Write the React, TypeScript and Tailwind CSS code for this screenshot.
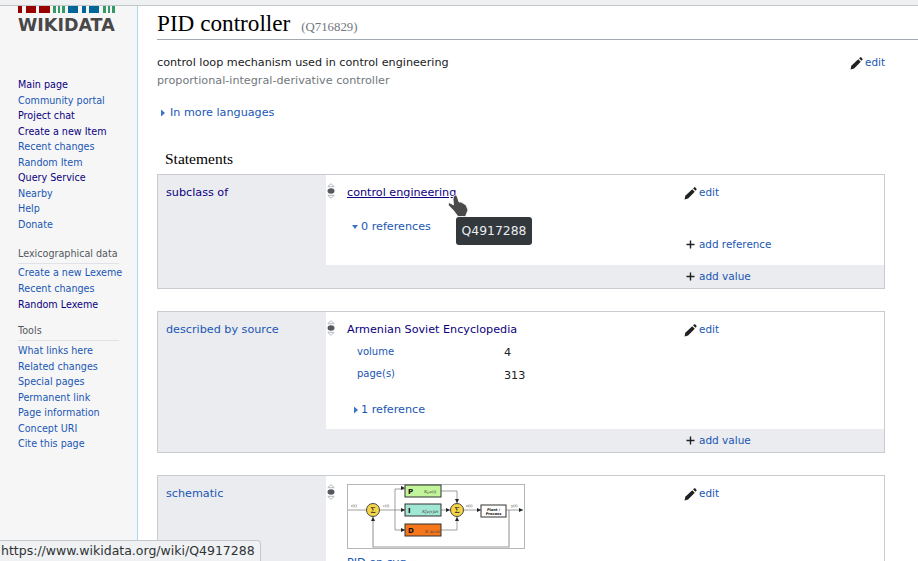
import { ReactNode } from "react";

const VISITED = "text-[#0b0080]";
const LINK = "text-[#1a56b4]";

const mainNav: [string, boolean][] = [
  ["Main page", true],
  ["Community portal", false],
  ["Project chat", true],
  ["Create a new Item", true],
  ["Recent changes", false],
  ["Random Item", false],
  ["Query Service", true],
  ["Nearby", false],
  ["Help", false],
  ["Donate", false],
];

const lexemeNav: [string, boolean][] = [
  ["Create a new Lexeme", false],
  ["Recent changes", false],
  ["Random Lexeme", true],
];

const toolsNav: [string, boolean][] = [
  ["What links here", false],
  ["Related changes", false],
  ["Special pages", false],
  ["Permanent link", false],
  ["Page information", false],
  ["Concept URI", false],
  ["Cite this page", false],
];

function NavList({ items }: { items: [string, boolean][] }) {
  return (
    <ul className="text-[9.6px] leading-[15.55px]">
      {items.map(([label, visited]) => (
        <li key={label} className={visited ? VISITED : LINK}>
          {label}
        </li>
      ))}
    </ul>
  );
}

function NavHeading({ children }: { children: ReactNode }) {
  return (
    <div className="mr-[18px] border-b border-[#dfe3e8] pb-[2px] text-[9.6px] leading-[14px] whitespace-nowrap text-[#54595d]">
      {children}
    </div>
  );
}

function Logo() {
  const bars: [number, number, string][] = [
    [0, 4, "#990000"], [8, 10, "#990000"], [21, 11, "#990000"],
    [35, 3, "#339966"], [40, 2, "#339966"], [44, 3, "#339966"],
    [50, 10, "#006699"], [64, 4, "#006699"], [71, 10, "#006699"],
    [85, 3, "#339966"], [90, 2, "#339966"], [94, 3, "#339966"],
  ];
  return (
    <div className="pl-[18px]">
      <svg width="97" height="7" className="block">
        {bars.map(([x, w, c]) => (
          <rect key={x} x={x} width={w} height="7" fill={c} />
        ))}
      </svg>
      <div className="mt-[3px] text-[17.5px] leading-[18px] font-bold whitespace-nowrap text-[#484848]">WIKIDATA</div>
    </div>
  );
}

function Sidebar() {
  return (
    <aside className="h-full w-[138px] shrink-0 border-r border-[#a7d7f9] bg-[#f6f6f6]">
      <Logo />
      <div className="pl-[18px] pt-[43px]">
        <NavList items={mainNav} />
        <div className="mt-[15px]">
          <NavHeading>Lexicographical data</NavHeading>
        </div>
        <div className="mt-[1px]">
          <NavList items={lexemeNav} />
        </div>
        <div className="mt-[12px]">
          <NavHeading>Tools</NavHeading>
        </div>
        <div className="mt-[2px]">
          <NavList items={toolsNav} />
        </div>
      </div>
    </aside>
  );
}

function PencilIcon() {
  return (
    <svg width="13" height="13" viewBox="0 0 14 14" className="shrink-0">
      <path d="M0.6 13.4 L1.4 9.4 L8.9 2.4 L11.6 5.1 L4.4 12.4 Z" fill="#202122" />
      <path d="M9.8 1.5 L11 0.4 Q11.5 0 12 0.4 L13.4 1.9 Q13.8 2.4 13.4 2.9 L12.4 4 Z" fill="#202122" />
    </svg>
  );
}

function PlusIcon() {
  return (
    <svg width="9" height="9" viewBox="0 0 9 9" className="shrink-0">
      <path d="M4.5 0.5 V8.5 M0.5 4.5 H8.5" stroke="#202122" strokeWidth="1.4" />
    </svg>
  );
}

function RankIcon() {
  return (
    <svg width="8" height="16" viewBox="0 0 8 16" className="-mt-[1px] shrink-0">
      <path d="M4 0.7 L7.2 3.7 H0.8 Z" fill="#fff" stroke="#a2a9b1" strokeWidth="0.8" />
      <ellipse cx="4" cy="8" rx="3.5" ry="2.8" fill="#54595d" />
      <path d="M4 15.3 L7.2 12.3 H0.8 Z" fill="#fff" stroke="#a2a9b1" strokeWidth="0.8" />
    </svg>
  );
}

function Toggle({ open }: { open?: boolean }) {
  return (
    <svg width="6" height="8" viewBox="0 0 6 8" className="shrink-0">
      {open ? <path d="M0 2 H6 L3 6 Z" fill="#3b73c8" /> : <path d="M1 0.5 L5 4 L1 7.5 Z" fill="#3b73c8" />}
    </svg>
  );
}

function AddValue() {
  return (
    <div className={`ml-[168px] flex h-[23px] items-center bg-[#eaecf0] pl-[360px] text-[10.5px] ${LINK}`}>
      <PlusIcon />
      <span className="ml-[4px]">add value</span>
    </div>
  );
}

function Edit() {
  return (
    <div className={`flex items-start self-start text-[10.4px] leading-[14px] ${LINK}`}>
      <PencilIcon />
      <span className="ml-[2px] -translate-y-[2px]">edit</span>
    </div>
  );
}

function Schematic() {
  return (
    <svg width="178" height="65" viewBox="0 0 178 65" className="-mt-[1px] block">
      <rect x="0.5" y="0.5" width="177" height="64" fill="#fff" stroke="#b4b8bd" />
      <g stroke="#777" fill="none" strokeWidth="0.7">
        <path d="M1 26 H19 M33 26 H58 M48 26 V5 H58 M48 26 V46 H58 M94 7 H110 V19 M94 26 H103 M94 46 H110 V33 M117 26 H134 M159 26 H176" />
        <path d="M26 33 V63 H162 V26" stroke="#999" strokeWidth="1.1" />
      </g>
      <g fill="#222">
        <path d="M58 4 L54 2 V6 Z M58 26 L54 24 V28 Z M58 46 L54 44 V48 Z M103 26 L99 24 V28 Z M134 26 L130 24 V28 Z M176 26 L172 24 V28 Z M110 19 L108 15 H112 Z M110 33 L108 37 H112 Z M26 33 L24 37 H28 Z" />
      </g>
      <circle cx="26" cy="26" r="6.5" fill="#f5d547" stroke="#444" />
      <circle cx="110" cy="26" r="6.5" fill="#f5d547" stroke="#444" />
      <rect x="58" y="1" width="36" height="12" fill="#c3f59a" stroke="#333" />
      <rect x="58" y="20" width="36" height="12" fill="#a2e6d4" stroke="#333" />
      <rect x="58" y="40" width="36" height="12" fill="#f5761b" stroke="#333" />
      <rect x="134" y="21" width="25" height="12" fill="#fff" stroke="#333" />
      <g fontFamily="Liberation Serif, serif" fill="#222">
        <text x="26" y="29" fontSize="9" textAnchor="middle">Σ</text>
        <text x="110" y="29" fontSize="9" textAnchor="middle">Σ</text>
        <g fontSize="4.5" fill="#555">
          <text x="4" y="23">r(t)</text>
          <text x="36" y="23">e(t)</text>
          <text x="119" y="23">u(t)</text>
          <text x="164" y="23">y(t)</text>
        </g>
        <g fontSize="5" fontStyle="italic" fill="#444">
          <text x="77" y="9">Kₚe(t)</text>
          <text x="75" y="28.5">K∫e(τ)dτ</text>
          <text x="78" y="48.5">K de/dt</text>
        </g>
      </g>
      <g fontFamily="DejaVu Sans, sans-serif" fill="#111" fontWeight="bold">
        <text x="61" y="10" fontSize="7">P</text>
        <text x="61" y="29" fontSize="7">I</text>
        <text x="61" y="49" fontSize="7">D</text>
        <text x="146.5" y="26.5" fontSize="3.6" textAnchor="middle">Plant /</text>
        <text x="146.5" y="31" fontSize="3.6" textAnchor="middle">Process</text>
      </g>
    </svg>
  );
}

function Claim({ label, labelColor, children, foot, height }: { label: string; labelColor: string; children: ReactNode; foot?: ReactNode; height: string }) {
  return (
    <section className={`relative ${height} overflow-hidden border border-[#c8ccd1]`}>
      <div className="absolute inset-y-0 left-0 w-[168px] bg-[#eaecf0] px-[8px] pt-[11px] text-[11.2px] leading-[14px]">
        <span className={labelColor}>{label}</span>
      </div>
      <div className="ml-[168px] flex flex-col">{children}</div>
      {foot}
    </section>
  );
}

function Overlays() {
  return (
    <>
      <svg width="23" height="24" viewBox="0 0 23 24" className="absolute left-[447px] top-[194px]">
        <path
          d="M7 1.5 Q8.5 0.5 10 2 L12 8 L14 8 L19 11 L21 16 L18.5 22.5 L11 22.5 L6.5 16.5 L1.2 11 L2.2 8.5 L6.5 11 L6 5 Z"
          fill="#4a4a4a"
          stroke="#fff"
          strokeWidth="0.8"
        />
      </svg>
      <div className="absolute left-[456px] top-[217px] flex h-[28px] w-[76px] items-center justify-center rounded-[3px] bg-[#32383c] text-[12.4px] text-[#eaecf0]">
        Q4917288
      </div>
      <div className="absolute bottom-0 left-0 flex h-[21px] items-center rounded-tr-[4px] border-t border-r border-[#c4c7c9] bg-[#f0f1f2] pr-[5px] pl-[1px] text-[12.5px] whitespace-nowrap text-[#2e3436]">
        https://www.wikidata.org/wiki/Q4917288
      </div>
    </>
  );
}

export default function App() {
  return (
    <div className="relative h-[561px] w-[918px] overflow-hidden bg-white font-['DejaVu_Sans',sans-serif]">
      <div className="h-[6px] border-b border-[#c4c7c9] bg-[#eff0f1]" />
      <div className="flex h-[555px]">
        <Sidebar />
        <main className="min-w-0 flex-1 pl-[19px]">
          <div className="flex h-[34px] items-center border-b border-[#a2a9b1] font-['Liberation_Serif',serif]">
            <h1 className="text-[23.2px] leading-[34px] text-[#000]">PID controller</h1>
            <span className="ml-[11px] translate-y-[5px] text-[12.8px] text-[#72777d]">(Q716829)</span>
          </div>

          <div className="mt-[14px] flex justify-between pr-[33px] text-[11.2px] leading-[18px]">
            <div>
              <div className="text-[#202122]">control loop mechanism used in control engineering</div>
              <div className="text-[#72777d]">proportional-integral-derivative controller</div>
            </div>
            <div className="mt-[3px]">
              <Edit />
            </div>
          </div>

          <div className={`mt-[15px] flex items-center pl-[3px] text-[11.2px] leading-[16px] ${LINK}`}>
            <Toggle />
            <span className="ml-[4px]">In more languages</span>
          </div>

          <h2 className="mt-[28px] pl-[8px] font-['Liberation_Serif',serif] text-[15.5px] leading-[20px] text-[#000]">Statements</h2>

          <div className="mt-[5px] mr-[33px] flex flex-col gap-[22px]">
            <Claim label="subclass of" labelColor={VISITED} height="h-[115px]" foot={<AddValue />}>
              <div className="flex h-[90px] pt-[9px]">
                <div className="ml-[1px] w-[20px] shrink-0"><RankIcon /></div>
                <div className="w-[337px] shrink-0 pt-[1px]">
                  <div className={`text-[11.2px] leading-[16px] underline ${VISITED}`}>control engineering</div>
                  <div className={`mt-[18px] ml-[5px] flex items-center text-[11.2px] leading-[16px] ${LINK}`}>
                    <Toggle open />
                    <span className="ml-[3px]">0 references</span>
                  </div>
                </div>
                <div className="flex flex-col pt-[3px]">
                  <Edit />
                  <div className={`mt-[36px] ml-[2px] flex items-center text-[10.4px] leading-[14px] ${LINK}`}>
                    <PlusIcon />
                    <span className="ml-[4px]">add reference</span>
                  </div>
                </div>
              </div>
            </Claim>

            <Claim label="described by source" labelColor={LINK} height="h-[142px]" foot={<AddValue />}>
              <div className="flex h-[117px] pt-[9px]">
                <div className="ml-[1px] w-[20px] shrink-0"><RankIcon /></div>
                <div className="w-[337px] shrink-0 pt-[1px] text-[11.2px]">
                  <div className={`leading-[16px] ${VISITED}`}>Armenian Soviet Encyclopedia</div>
                  <div className="mt-[7px] ml-[10px] flex leading-[14px]">
                    <span className={`w-[147px] text-[10px] ${LINK}`}>volume</span>
                    <span className="translate-y-[1px] text-[#202122]">4</span>
                  </div>
                  <div className="mt-[8px] ml-[10px] flex leading-[14px]">
                    <span className={`w-[147px] text-[10px] ${LINK}`}>page(s)</span>
                    <span className="translate-y-[2px] text-[#202122]">313</span>
                  </div>
                  <div className={`mt-[21px] ml-[6px] flex items-center leading-[16px] ${LINK}`}>
                    <Toggle />
                    <span className="ml-[2px]">1 reference</span>
                  </div>
                </div>
                <div className="pt-[3px]">
                  <Edit />
                </div>
              </div>
            </Claim>

            <Claim label="schematic" labelColor={LINK} height="h-[120px]">
              <div className="flex pt-[9px]">
                <div className="ml-[1px] w-[20px] shrink-0"><RankIcon /></div>
                <div className="w-[337px] shrink-0">
                  <Schematic />
                  <div className={`mt-[6px] text-[11.2px] leading-[16px] ${LINK}`}>PID en.svg</div>
                </div>
                <div className="pt-[3px]">
                  <Edit />
                </div>
              </div>
            </Claim>
          </div>
        </main>
      </div>
      <Overlays />
    </div>
  );
}
